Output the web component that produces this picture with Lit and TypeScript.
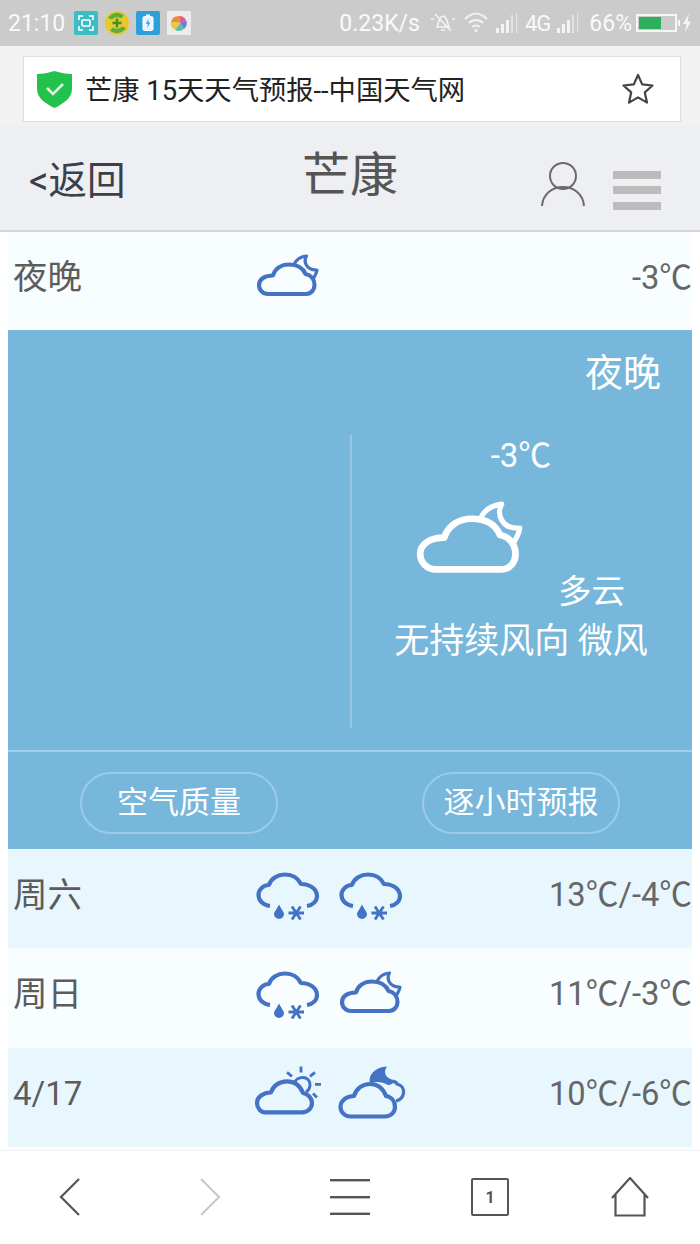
import { LitElement, css, html, svg } from "lit";
import { customElement } from "lit/decorators.js";

const BLUE = "#4472c4";

const cloudMoon = (color: string, body = 4.2, moon = 3.2) => svg`
  <path d="M12 41 H50 C55.5 41 58.5 36.5 58.5 32 C58.5 26.5 55 22 49.5 21 C46.5 14 40 11.5 33 11.5 C25 11.5 19 16 17 22.5 C9 22.5 3 26 3 32 C3 37 7 41 12 41 Z" fill="none" stroke=${color} stroke-width=${body} stroke-linejoin="round"/>
  <path d="M38.5 10.5 C41 6 45.5 3.5 50.5 3 C47.5 8 49.5 17.5 61 17 C60.5 20 59.5 22 58 24.5" fill="none" stroke=${color} stroke-width=${moon} stroke-linejoin="round" stroke-linecap="round"/>`;

const rainSnow = svg`
  <path d="M14 35 C7 34 2.5 29.5 2.5 24 C2.5 18 8 14 13 14 C15 7.5 22 3.5 29 3.5 C36 3.5 42 7 45 13 C54 13 61 18 61 25 C61 30 57 34 51 35" fill="none" stroke=${BLUE} stroke-width="4.2" stroke-linejoin="round"/>
  <path d="M23 33.5 C25.5 38.5 28 41 28 43 a5 5 0 0 1 -10 0 C18 41 20.5 38.5 23 33.5 Z" fill=${BLUE}/>
  <path d="M32.5 42 H48 M36 35.5 L44.5 48.5 M44.5 35.5 L36 48.5" stroke=${BLUE} stroke-width="2.8" fill="none"/>`;

const cloudSun = svg`
  <path d="M9 43.4 H46 C52 43.4 56 39 56 34 C56 29 52 25 47 24 C44 16.5 38 12.4 31 12.4 C23 12.4 17 17 15 23.5 C7 23.5 1 28 1 34 C1 39 5 43.4 9 43.4 Z" fill="none" stroke=${BLUE} stroke-width="4.2" stroke-linejoin="round"/>
  <path d="M38 15 C39 10.5 43 8.4 47 8.4 C51 8.4 54 11.5 54 15.4 C54 18.5 53 21 50 23" fill="none" stroke=${BLUE} stroke-width="3"/>
  <path d="M31 3.4 L36 7.4 M45 -2.6 V3.4 M59 3.4 L54 7.4 M59 15.4 H65 M57 24.4 L61 28.4" stroke=${BLUE} stroke-width="2.8" fill="none"/>`;

const cloudMoonDark = svg`
  <path d="M11 47.5 H46 C52 47.5 56 43 56 38 C56 33 53 28 47 27 C44 19 38 15 31 15 C23 15 17 20 15 27 C7 27 1.5 32 1.5 38 C1.5 43 6 47.5 11 47.5 Z" fill="none" stroke=${BLUE} stroke-width="4.2" stroke-linejoin="round"/>
  <path d="M31 14 C29 6 36 -2 48 -2.6 C44 3 46 10 56 11 C54 14 52 16 49 16 C44 13 38 12 31 14 Z" fill=${BLUE}/>
  <path d="M50 14 C53 12 57 12 58 15 C63 16 65 20 64.5 24 C64 28 61 31 57 32" fill="none" stroke=${BLUE} stroke-width="3.2"/>`;

const ICONS = { cloudMoon: cloudMoon(BLUE), rainSnow, cloudSun, cloudMoonDark };

interface DayRow {
  name: string;
  icons: (keyof typeof ICONS)[];
  temp: string;
  tint: boolean;
}

const DAYS: DayRow[] = [
  { name: "周六", icons: ["rainSnow", "rainSnow"], temp: "13℃/-4℃", tint: true },
  { name: "周日", icons: ["rainSnow", "cloudMoon"], temp: "11℃/-3℃", tint: false },
  { name: "4/17", icons: ["cloudSun", "cloudMoonDark"], temp: "10℃/-6℃", tint: true },
];

// ℃ has to come from the CJK font, Roboto's fallback draws it too loose
const degrees = (t: string) =>
  t.split("℃").map((part, i) => (i === 0 ? part : html`<span class="deg">℃</span>${part}`));

@customElement("app-root")
export class AppRoot extends LitElement {
  static override styles = css`
    :host {
      display: block;
      width: 700px;
      height: 1244px;
      overflow: hidden;
      background: #fff;
      font-family: Roboto, "Noto Sans CJK SC", sans-serif;
      color: #555;
    }

    .deg { font-family: "Noto Sans CJK SC", sans-serif; }

    .status {
      height: 46px;
      background: #cbcbcb;
      color: #fafafa;
      display: flex;
      align-items: center;
      padding: 0 8px 0 8px;
      font-size: 23px;
      box-sizing: border-box;
    }
    .status .apps { display: flex; gap: 7px; margin-left: 9px; }
    .status .apps svg { display: block; }
    .status .right { margin-left: auto; display: flex; align-items: center; gap: 7px; }
    .status .right svg { display: block; }
    .status .bell { margin-left: 3px; }
    .status .small { font-size: 22px; letter-spacing: -1px; }
    .status .pct { margin-left: 3px; }
    .status .battery { margin-left: -3px; }

    .address-wrap {
      height: 80px;
      box-sizing: border-box;
      background: #f2f2f2;
      padding: 10px 19px 4px 23px;
    }
    .address {
      height: 66px;
      box-sizing: border-box;
      background: #fff;
      border: 1px solid #e0e0e0;
      display: flex;
      align-items: center;
      padding: 0 26px 0 13px;
      font-size: 27.3px;
      color: #222;
    }
    .address .url { margin: -2px 0 0 13px; }
    .address .star { margin-left: auto; display: block; }

    .header {
      height: 106px;
      box-sizing: border-box;
      background: #eeeff2;
      border-bottom: 2px solid #d6d5dc;
      display: grid;
      grid-template-columns: 1fr auto 1fr;
      align-items: center;
      padding: 0 39px 0 29px;
    }
    .back { font-size: 38.5px; color: #3a3f4b; margin-top: -2px; }
    .title { font-size: 48px; color: #555; margin: -14px 0 0 10px; }
    .actions { display: flex; justify-content: flex-end; align-items: center; gap: 27px; }
    .actions svg { display: block; margin-top: 14px; }
    .bars { display: flex; flex-direction: column; gap: 7.5px; margin-top: 24px; }
    .bars i { display: block; width: 48px; height: 8px; background: #bcbcbc; }

    .content { margin: 0 8px; }

    .row {
      height: 99.3px;
      box-sizing: border-box;
      display: grid;
      grid-template-columns: 243px 1fr auto;
      align-items: center;
      background: #f8fdff;
      padding-left: 5px;
      font-size: 34.5px;
      color: #5c5c5c;
    }
    .row.first { height: 98px; }
    .row.tint { background: #e8f7fe; }
    .row .name { margin-top: -14px; }
    .row .name.num { margin-top: -8px; font-size: 33px; }
    .row .icons { display: flex; gap: 19px; margin-top: -4px; }
    .row .icons svg { display: block; overflow: visible; }
    .row .temp { font-size: 32.7px; color: #666; margin-top: -14px; }

    .panel {
      height: 519px;
      background: #77b7db;
      color: #fff;
      display: flex;
      flex-direction: column;
    }
    .panel .label {
      font-size: 38px;
      text-align: right;
      padding: 12px 31px 0 0;
      height: 85px;
      box-sizing: border-box;
    }
    .panel .main {
      display: grid;
      grid-template-columns: 342px 1fr;
      height: 337px;
      border-bottom: 2px solid #a2d0ec;
      padding-bottom: 22px;
      box-sizing: border-box;
      padding-top: 20px;
    }
    .panel .detail {
      border-left: 2px solid #97c8e6;
      display: flex;
      flex-direction: column;
      align-items: center;
      padding-right: 2px;
    }
    .panel .now { font-size: 33px; margin-top: -6px; }
    .panel .big { align-self: flex-start; margin: 22px 0 0 63px; display: block; overflow: visible; }
    .panel .sky { align-self: flex-end; font-size: 33.5px; margin: -8px 65px 0 0; line-height: 44px; }
    .panel .wind { font-size: 35px; line-height: 50px; margin-top: 3px; white-space: nowrap; }

    .buttons {
      display: grid;
      grid-template-columns: 1fr 1fr;
      justify-items: center;
      padding-top: 20px;
    }
    .pill {
      width: 198px;
      height: 62px;
      box-sizing: border-box;
      border: 2px solid #9ccbea;
      border-radius: 31px;
      display: flex;
      align-items: center;
      justify-content: center;
      font-size: 31px;
      padding-bottom: 8px;
    }

    .nav {
      height: 94px;
      margin-top: 3px;
      border-top: 1px solid #f0f0f2;
      display: grid;
      grid-template-columns: repeat(5, 1fr);
      align-items: center;
      justify-items: center;
      background: #fff;
    }
    .nav svg { display: block; margin-top: -1px; }
    .nav text { font-family: Roboto, sans-serif; }
  `;

  private dayRow(d: DayRow) {
    return html`
      <div class="row ${d.tint ? "tint" : ""}">
        <span class="name ${d.name.includes("/") ? "num" : ""}">${d.name}</span>
        <div class="icons">
          ${d.icons.map(
            (k) => html`<svg width="64" height="52" viewBox="0 0 64 52">${ICONS[k]}</svg>`,
          )}
        </div>
        <span class="temp">${degrees(d.temp)}</span>
      </div>
    `;
  }

  private statusBar() {
    return html`
      <div class="status">
        <span>21:10</span>
        <div class="apps">
          <svg width="24" height="24" viewBox="0 0 24 24">
            <rect width="24" height="24" rx="2" fill="#3cbcc4" />
            <path d="M5 9V5H9M15 5H19V9M19 15V19H15M9 19H5V15" stroke="#fff" stroke-width="1.6" fill="none" />
            <rect x="8" y="9" width="8" height="6" rx="1" stroke="#fff" stroke-width="1.6" fill="none" />
          </svg>
          <svg width="24" height="24" viewBox="0 0 24 24">
            <circle cx="12" cy="12" r="12" fill="#e8c92c" />
            <path d="M3 7A10.5 10.5 0 0 1 19 4.5L16 7.5A6.5 6.5 0 0 0 7 8.5Z M21 17A10.5 10.5 0 0 1 5 19.5L8 16.5A6.5 6.5 0 0 0 17 15.5Z" fill="#5cae3c" />
            <path d="M12 7.5V16.5M7.5 12H16.5" stroke="#3f8f2c" stroke-width="2.4" />
          </svg>
          <svg width="24" height="24" viewBox="0 0 24 24">
            <rect width="24" height="24" rx="2" fill="#2f9fdc" />
            <rect x="7" y="5.5" width="10" height="14" rx="1.5" fill="#e8f4fb" stroke="#fff" />
            <rect x="10" y="3.5" width="4" height="2" fill="#fff" />
            <path d="M12.8 7.5L9.8 12.8H12L11.2 17L14.3 11.5H12.2Z" fill="#2f9fdc" />
          </svg>
          <svg width="24" height="24" viewBox="0 0 24 24">
            <rect width="24" height="24" rx="1" fill="#ececec" />
            <path d="M4 11A8 8 0 0 1 12 5L13 12Z" fill="#f08a3c" />
            <path d="M12 5A8 8 0 0 1 19 9L13 12Z" fill="#e8588c" />
            <path d="M19 9A8 8 0 0 1 17 18L13 12Z" fill="#6a7fd8" />
            <path d="M17 18A8 8 0 0 1 8 19L13 12Z" fill="#58c0a8" />
            <path d="M8 19A8 8 0 0 1 4 11L13 12Z" fill="#f2c63c" />
          </svg>
        </div>
        <div class="right">
          <span>0.23K/s</span>
          <svg class="bell" width="26" height="24" viewBox="0 0 26 24" fill="none" stroke="#f4f4f4" stroke-width="1.6">
            <path d="M7 16C9 13 8 6 13 5C18 6 17 13 19 16Z M11 19H15 M5 3L21 20 M1 8H4 M22 8H25" />
          </svg>
          <svg width="26" height="22" viewBox="0 0 26 22" fill="none" stroke="#f4f4f4" stroke-width="2">
            <path d="M2 7C9 0 17 0 24 7M6 11C10 7 16 7 20 11M9.5 15C11.5 13 14.5 13 16.5 15" />
            <circle cx="13" cy="18.5" r="1.5" fill="#f4f4f4" stroke="none" />
          </svg>
          <svg width="22" height="22" viewBox="0 0 22 22" fill="#f4f4f4">
            <rect x="0" y="16" width="3" height="5" /><rect x="5" y="12" width="3" height="9" />
            <rect x="10" y="8" width="3" height="13" /><rect x="15" y="3" width="2" height="18" opacity=".6" />
            <rect x="20" y="1" width="1.2" height="20" opacity=".6" />
          </svg>
          <span class="small">4G</span>
          <svg width="22" height="22" viewBox="0 0 22 22" fill="#f4f4f4">
            <rect x="0" y="16" width="3" height="5" /><rect x="5" y="12" width="3" height="9" />
            <rect x="10" y="8" width="3" height="13" /><rect x="15" y="3" width="2" height="18" opacity=".6" />
            <rect x="20" y="1" width="1.2" height="20" opacity=".6" />
          </svg>
          <span class="pct">66%</span>
          <svg class="battery" width="56" height="20" viewBox="0 0 56 20">
            <rect x="1" y="2" width="39" height="16" fill="none" stroke="#f6f6f6" stroke-width="2" />
            <rect x="3" y="4" width="22" height="12" fill="#2fae5c" />
            <rect x="42" y="7" width="2" height="6" fill="#f6f6f6" />
            <path d="M53 1L47 11H50.5L49 19L55 8.5H51.5Z" fill="#f6f6f6" />
          </svg>
        </div>
      </div>
    `;
  }

  override render() {
    return html`
      ${this.statusBar()}
      <div class="address-wrap">
        <div class="address">
          <svg width="35" height="37" viewBox="0 0 35 37">
            <path d="M17.5 0C24 2 29 3 35 3V18C35 27 26 33 17.5 37C9 33 0 27 0 18V3C6 3 11 2 17.5 0Z" fill="#22c24c" />
            <path d="M10 17L16 23L26 13" fill="none" stroke="#dff7e4" stroke-width="2.6" />
          </svg>
          <span class="url">芒康 15天天气预报--中国天气网</span>
          <svg class="star" width="32" height="32" viewBox="0 0 32 32">
            <path d="M16 2L20.2 11.4L30.5 12.5L22.8 19.4L25 29.6L16 24.4L7 29.6L9.2 19.4L1.5 12.5L11.8 11.4Z" fill="none" stroke="#444" stroke-width="2.2" stroke-linejoin="round" />
          </svg>
        </div>
      </div>

      <div class="header">
        <span class="back">&lt;返回</span>
        <span class="title">芒康</span>
        <div class="actions">
          <svg width="46" height="46" viewBox="0 0 46 46" fill="none" stroke="#6b6b6b" stroke-width="2">
            <circle cx="23" cy="14" r="13" />
            <path d="M2 44C3 32 12 25 23 25C34 25 43 32 44 44" />
          </svg>
          <div class="bars"><i></i><i></i><i></i></div>
        </div>
      </div>

      <div class="content">
        <div class="row first">
          <span class="name">夜晚</span>
          <div class="icons">
            <svg width="64" height="46" viewBox="0 0 64 46" style="margin-top:-6px">${ICONS.cloudMoon}</svg>
          </div>
          <span class="temp">${degrees("-3℃")}</span>
        </div>

        <div class="panel">
          <div class="label">夜晚</div>
          <div class="main">
            <div></div>
            <div class="detail">
              <span class="now">${degrees("-3℃")}</span>
              <svg class="big" width="110" height="79" viewBox="0 0 64 46">${cloudMoon("#fff", 3.9, 3)}</svg>
              <span class="sky">多云</span>
              <span class="wind">无持续风向 微风</span>
            </div>
          </div>
          <div class="buttons">
            <div class="pill">空气质量</div>
            <div class="pill">逐小时预报</div>
          </div>
        </div>

        ${DAYS.map((d) => this.dayRow(d))}
      </div>

      <div class="nav">
        <svg width="24" height="40" viewBox="0 0 24 40" fill="none" stroke="#555" stroke-width="2.2"><path d="M21 2L3 20L21 38" /></svg>
        <svg width="24" height="40" viewBox="0 0 24 40" fill="none" stroke="#c9c9c9" stroke-width="2.2"><path d="M3 2L21 20L3 38" /></svg>
        <svg width="40" height="36" viewBox="0 0 40 36" fill="#555"><rect y="0" width="40" height="2.4" /><rect y="17" width="40" height="2.4" /><rect y="33.6" width="40" height="2.4" /></svg>
        <svg width="38" height="38" viewBox="0 0 38 38">
          <rect x="1" y="1" width="36" height="36" rx="1" fill="none" stroke="#555" stroke-width="2" />
          <text x="19" y="25" font-size="16" font-weight="700" text-anchor="middle" fill="#555">1</text>
        </svg>
        <svg width="38" height="40" viewBox="0 0 38 40" fill="none" stroke="#555" stroke-width="2.2"><path d="M1 21L19 1L37 21M4.5 18V38.5H33.5V18" /></svg>
      </div>
    `;
  }
}

declare global {
  interface HTMLElementTagNameMap {
    "app-root": AppRoot;
  }
}
